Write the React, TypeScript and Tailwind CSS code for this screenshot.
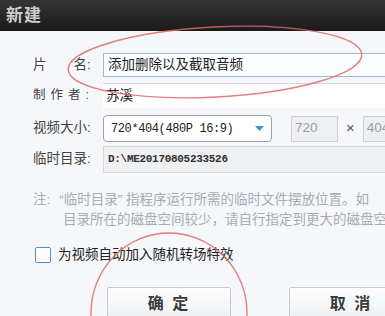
import React from 'react'

const cjk = '"Liberation Sans", "Noto Sans CJK SC", sans-serif'
const mono = '"Liberation Mono", "Noto Sans CJK SC", monospace'

export default function App() {
  return (
    <div
      className="relative w-[385px] h-[316px] overflow-hidden bg-[#f5f7fa] text-[13.5px] text-[#444]"
      style={{ fontFamily: cjk }}
    >
      {/* title bar */}
      <div className="h-[31px] flex items-center pl-[6px] bg-gradient-to-b from-[#353535] to-[#1b1b1b]">
        <span className="text-[17px] font-bold text-[#cdcdcd] tracking-[1px]">新建</span>
      </div>

      <div className="pl-[33px] pt-[22px]">
        {/* name */}
        <div className="flex items-center h-[24px]">
          <div className="w-[70px] shrink-0 flex items-center">
            <span>片</span>
            <span className="ml-[27px]">名:</span>
          </div>
          <div className="w-[300px] shrink-0 h-[24px] flex items-center pl-[4px] bg-[#fcfdfe] border border-[#9dbad8] text-[#222]">
            添加删除以及截取音频
          </div>
        </div>

        {/* author */}
        <div className="flex items-center h-[25px] mt-[6px]">
          <div className="w-[70px] shrink-0 text-[12.5px] tracking-[5px]">制作者:</div>
          <div className="w-[300px] shrink-0 h-[25px] flex items-center pl-[3px] bg-white border-t border-[#d4d8dc] text-[#222]">
            苏溪
          </div>
        </div>

        {/* video size */}
        <div className="flex items-center h-[27px] mt-[7px]">
          <div className="w-[70px] shrink-0">视频大小:</div>
          <div className="w-[169px] shrink-0 h-[27px] flex items-center justify-between pl-[7px] pr-[7px] bg-white border border-[#9aa2ab] rounded-[4px]">
            <span className="text-[12px] tracking-[-0.4px] text-[#222]" style={{ fontFamily: mono }}>
              720*404(480P 16:9)
            </span>
            <svg width="9" height="5" viewBox="0 0 9 5">
              <path d="M0 0 L9 0 L4.5 5 Z" fill="#3d8fd9" />
            </svg>
          </div>
          <div className="ml-[19px] shrink-0 w-[47px] h-[26px] flex items-center pl-[3px] bg-[#eeeff0] border border-[#cdcfd2] text-[#9a9ea3]">
            720
          </div>
          <span className="ml-[8px] shrink-0 text-[15px] text-[#555]">×</span>
          <div className="ml-[8px] shrink-0 w-[47px] h-[26px] flex items-center pl-[3px] bg-[#eeeff0] border border-[#cdcfd2] text-[#9a9ea3]">
            404
          </div>
        </div>

        {/* temp dir */}
        <div className="flex items-center h-[27px] mt-[4px]">
          <div className="w-[70px] shrink-0">临时目录:</div>
          <div className="w-[300px] shrink-0 h-[27px] flex items-center pl-[4px] bg-[#eef0f2] border border-[#d6d9dc]">
            <span className="text-[11px] font-bold text-[#333] tracking-[-0.3px]" style={{ fontFamily: mono }}>
              D:\ME20170805233526
            </span>
          </div>
        </div>

        {/* note */}
        <div className="mt-[17px] text-[#a7adb3] leading-[20px] whitespace-nowrap">
          <div>
            <span>注:</span>
            <span className="ml-[9px]">“临时目录” 指程序运行所需的临时文件摆放位置。如</span>
          </div>
          <div className="pl-[30px]">目录所在的磁盘空间较少，请自行指定到更大的磁盘空</div>
        </div>

        {/* checkbox */}
        <div className="flex items-center mt-[17px] ml-[2px] h-[16px]">
          <div className="w-[16px] h-[16px] shrink-0 rounded-[2px] border border-[#4b8fd6] bg-white" />
          <span className="ml-[7px] text-[#222]">为视频自动加入随机转场特效</span>
        </div>

        {/* buttons */}
        <div className="flex mt-[24px] ml-[74px] gap-[58px]">
          <button className="w-[124px] h-[34px] shrink-0 rounded-[2px] border border-[#c6c8cb] bg-gradient-to-b from-white to-[#eceef0] text-[16px] font-bold text-[#3a3a3a] tracking-[2px]">
            确 定
          </button>
          <button className="w-[124px] h-[34px] shrink-0 rounded-[2px] border border-[#c6c8cb] bg-gradient-to-b from-white to-[#eceef0] text-[16px] font-bold text-[#3a3a3a] tracking-[2px]">
            取 消
          </button>
        </div>
      </div>

      {/* red annotation marks */}
      <svg className="absolute inset-0 pointer-events-none" width="385" height="316" viewBox="0 0 385 316">
        <ellipse cx="215" cy="62" rx="147" ry="35" transform="rotate(-3 215 62)" fill="none" stroke="#e06868" strokeWidth="1.4" opacity="0.85" />
        <ellipse cx="169" cy="313" rx="78" ry="80" fill="none" stroke="#e06868" strokeWidth="1.4" opacity="0.85" />
      </svg>
    </div>
  )
}
